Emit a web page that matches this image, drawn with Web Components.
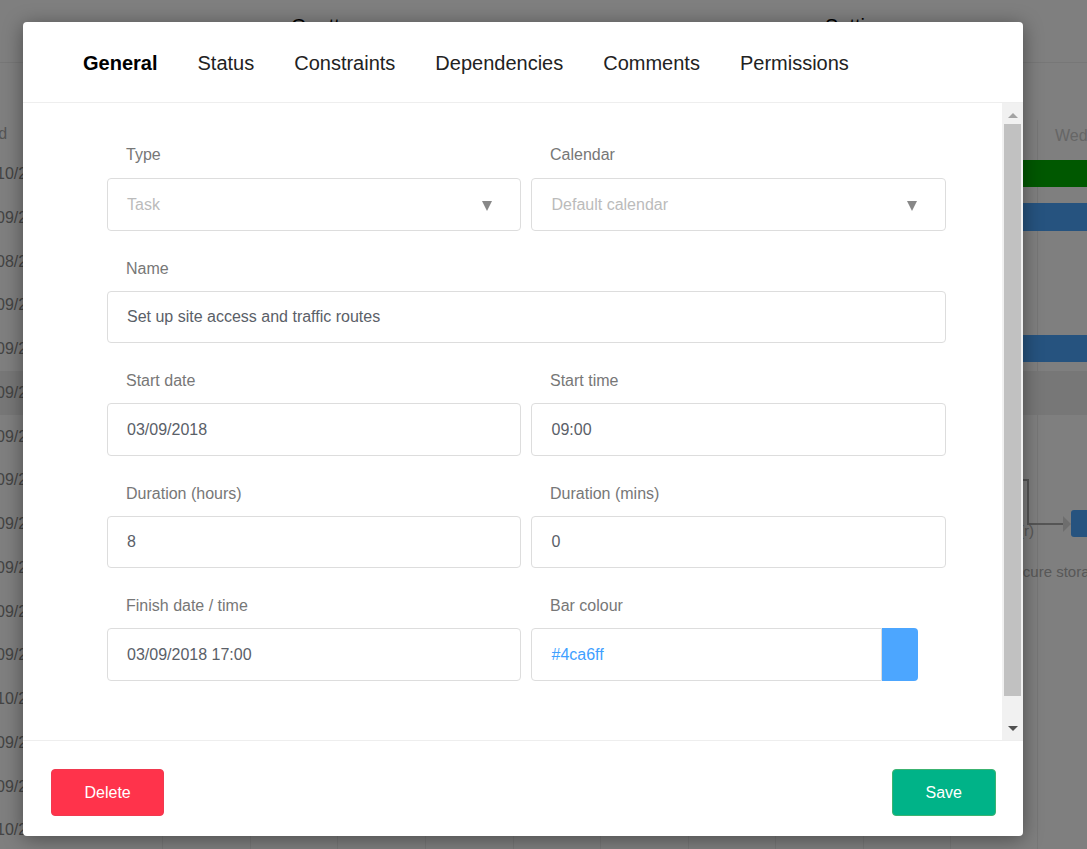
<!DOCTYPE html>
<html>
<head>
<meta charset="utf-8">
<title>Task editor</title>
<style>
  html, body { margin: 0; height: 100%; overflow: hidden; background: #fff; }
  body { font-family: "Liberation Sans", Arial, sans-serif; }
</style>
</head>
<body>
<gantt-app>
  <gantt-backdrop></gantt-backdrop>
  <task-modal>
    <tab-item slot="tabs" active>General</tab-item>
    <tab-item slot="tabs">Status</tab-item>
    <tab-item slot="tabs">Constraints</tab-item>
    <tab-item slot="tabs">Dependencies</tab-item>
    <tab-item slot="tabs">Comments</tab-item>
    <tab-item slot="tabs">Permissions</tab-item>

    <form-field label="Type" kind="select" muted first>Task</form-field>
    <form-field label="Calendar" kind="select" muted first right>Default calendar</form-field>
    <form-field label="Name" wide>Set up site access and traffic routes</form-field>
    <form-field label="Start date">03/09/2018</form-field>
    <form-field label="Start time" right>09:00</form-field>
    <form-field label="Duration (hours)">8</form-field>
    <form-field label="Duration (mins)" right>0</form-field>
    <form-field label="Finish date / time">03/09/2018 17:00</form-field>
    <form-field label="Bar colour" kind="colour" right>#4ca6ff</form-field>

    <action-button slot="footer" colour="#ff334b" edge="#f0394f" pad="32.5">Delete</action-button>
    <action-button slot="footer" colour="#00b388" edge="#3cb371" pad="33">Save</action-button>
  </task-modal>
</gantt-app>

<script>
class GanttApp extends HTMLElement {
  connectedCallback() {
    this.attachShadow({ mode: 'open' });
    this.shadowRoot.innerHTML = `
      <style>
        :host { display: block; position: relative; width: 100%; height: 100vh; overflow: hidden; }
        .overlay {
          position: absolute;
          inset: 0;
          background: rgba(0, 0, 0, 0.5);
          padding: 22px 0 0 23px;
          box-sizing: border-box;
        }
      </style>
      <slot></slot>
      <div class="overlay"><slot name="modal"></slot></div>
    `;
    const modal = this.querySelector('task-modal');
    if (modal) modal.slot = 'modal';
  }
}

class GanttBackdrop extends HTMLElement {
  connectedCallback() {
    this.attachShadow({ mode: 'open' });
    const dates = ['10/2', '09/2', '08/2', '09/2', '09/2', '09/2', '09/2', '09/2', '09/2', '09/2', '09/2', '09/2', '10/2', '09/2', '09/2', '10/2'];
    const lines = [162, 250, 337, 425, 513, 600, 688, 775, 863, 950, 1037];
    this.shadowRoot.innerHTML = `
      <style>
        :host { display: block; position: absolute; inset: 0; color: #333; font-size: 16px; font-family: "Liberation Sans", Arial, sans-serif; }
        .top { height: 62px; border-bottom: 1px solid #eee; position: relative; }
        .top span { position: absolute; top: 15px; font-size: 20px; color: #000; }
        .rows { position: absolute; left: 0; top: 152px; right: 0; }
        .row { height: 43.75px; line-height: 43.75px; box-sizing: border-box; white-space: nowrap; color: #888; }
        .row.hl { background: #eee; }
        .row span { margin-left: -4px; }
        .head { position: absolute; top: 125px; left: -39px; color: #aaa; }
        .line { position: absolute; top: 120px; bottom: 0; width: 1px; background: #eee; }
        .bar { position: absolute; left: 1023px; right: 0; }
        .wed { position: absolute; left: 1055px; top: 127px; color: #ccc; }
        .link { position: absolute; background: #aaa; }
        .tri { position: absolute; left: 1063px; top: 516px; border-left: 8px solid #ddd; border-top: 8px solid transparent; border-bottom: 8px solid transparent; }
        .node { position: absolute; left: 1071px; top: 510px; width: 40px; height: 27px; background: #4ca6ff; border-radius: 3px; }
        .note { position: absolute; color: #b0b0b0; font-size: 15px; white-space: nowrap; }
      </style>
      <div class="top"><span style="left:291px">Gantt</span><span style="left:825px">Settings</span></div>
      <div class="head">Period</div>
      <div class="rows">
        ${dates.map((d, i) => `<div class="row${i === 5 ? ' hl' : ''}"><span>${d}</span></div>`).join('')}
      </div>
      ${lines.map(x => `<div class="line" style="left:${x}px"></div>`).join('')}
      <div class="wed">Wed</div>
      <div class="bar" style="top:160px;height:27px;background:#00b000"></div>
      <div class="bar" style="top:203px;height:28px;background:#4ca6ff"></div>
      <div class="bar" style="top:335px;height:27px;background:#4ca6ff"></div>
      <div class="link" style="left:1000px;top:479px;width:29px;height:2px"></div>
      <div class="link" style="left:1027px;top:479px;width:2px;height:45px"></div>
      <div class="link" style="left:1027px;top:523px;width:37px;height:2px"></div>
      <div class="tri"></div>
      <div class="node"></div>
      <div class="note" style="right:53px;top:522px">(r)</div>
      <div class="note" style="left:1004.5px;top:563px">Secure storage</div>
    `;
  }
}

class TabItem extends HTMLElement {
  connectedCallback() {
    this.attachShadow({ mode: 'open' });
    this.shadowRoot.innerHTML = `
      <style>
        :host { display: block; font-size: 20px; line-height: 24px; margin-top: 2px; color: #222; white-space: nowrap; cursor: pointer; }
        :host([active]) { font-weight: 700; color: #000; }
      </style>
      <slot></slot>
    `;
  }
}

class FormField extends HTMLElement {
  connectedCallback() {
    this.attachShadow({ mode: 'open' });
    const kind = this.getAttribute('kind') || 'text';
    const arrow = kind === 'select'
      ? '<svg class="arrow" width="10" height="10" viewBox="0 0 10 10"><polygon points="0,0 10,0 5,10" fill="#888"/></svg>'
      : '';
    const swatch = kind === 'colour' ? '<div class="swatch"></div>' : '';
    this.shadowRoot.innerHTML = `
      <style>
        :host { display: block; min-width: 0; }
        :host([wide]) { grid-column: 1 / -1; }
        label { display: block; font-size: 16px; line-height: 24px; color: #777; padding: 2.125px 0 0 19px; margin-bottom: 9.875px; }
        :host([first]) label { padding-top: 1px; margin-bottom: 11px; }
        .wrap { display: flex; height: 52.5px; }
        .box {
          flex: 1;
          min-width: 0;
          display: flex;
          align-items: center;
          justify-content: space-between;
          box-sizing: border-box;
          border: 1px solid #ddd;
          border-radius: 4px;
          padding: 1px 28px 0 19px;
          font-size: 16px;
          color: #5a6068;
          background: #fff;
        }
        :host([right]) .box { padding-left: 19.5px; }
        :host([muted]) .box { color: #bbb; }
        :host([kind="colour"]) .wrap { margin-right: 28px; }
        :host([kind="colour"]) .box { color: #3fa0ff; border-radius: 4px 0 0 4px; }
        .swatch { flex: 0 0 36px; background: #4ca6ff; border-radius: 0 4px 4px 0; }
        .arrow { flex: none; margin-top: 2px; }
      </style>
      <label>${this.getAttribute('label')}</label>
      <div class="wrap">
        <div class="box"><span><slot></slot></span>${arrow}</div>
        ${swatch}
      </div>
    `;
  }
}

class ScrollTrack extends HTMLElement {
  connectedCallback() {
    this.attachShadow({ mode: 'open' });
    this.shadowRoot.innerHTML = `
      <style>
        :host { display: flex; flex: 0 0 21px; flex-direction: column; background: #f1f1f1; box-sizing: border-box; padding: 0 2px; }
        .cap { flex: 0 0 21px; display: flex; align-items: center; justify-content: center; }
        .cap.end { flex-basis: 24px; }
        .gap { flex: 1; }
        .thumb { flex: 0 0 572px; background: #c1c1c1; }
      </style>
      <div class="cap"><svg width="10" height="5" viewBox="0 0 10 5" style="margin-top:3px"><polygon points="5,0 10,5 0,5" fill="#a3a3a3"/></svg></div>
      <div class="thumb"></div>
      <div class="gap"></div>
      <div class="cap end"><svg width="10" height="5" viewBox="0 0 10 5"><polygon points="0,0 10,0 5,5" fill="#505050"/></svg></div>
    `;
  }
}

class ActionButton extends HTMLElement {
  connectedCallback() {
    this.attachShadow({ mode: 'open' });
    this.shadowRoot.innerHTML = `
      <style>
        :host {
          display: block;
          box-sizing: border-box;
          height: 47px;
          line-height: 45px;
          padding: 0 ${this.getAttribute('pad')}px;
          font-size: 16px;
          color: #fff;
          border-radius: 4px;
          cursor: pointer;
          background: ${this.getAttribute('colour')};
          border: 1px solid ${this.getAttribute('edge')};
        }
      </style>
      <slot></slot>
    `;
  }
}

class TaskModal extends HTMLElement {
  connectedCallback() {
    this.attachShadow({ mode: 'open' });
    this.shadowRoot.innerHTML = `
      <style>
        :host {
          display: flex;
          flex-direction: column;
          width: 1000px;
          height: 814px;
          background: #fff;
          border-radius: 4px;
          box-shadow: 0 3px 20px rgba(0, 0, 0, 0.4);
          overflow: hidden;
          font-family: "Liberation Sans", Arial, sans-serif;
        }
        header {
          flex: 0 0 80px;
          box-sizing: border-box;
          display: flex;
          align-items: center;
          gap: 40px;
          padding: 0 60px;
        }
        .body { flex: 1; display: flex; min-height: 0; border-top: 1px solid #eee; border-bottom: 1px solid #eee; }
        .form {
          flex: 1;
          box-sizing: border-box;
          display: grid;
          grid-template-columns: 414px 415px;
          column-gap: 10px;
          row-gap: 24px;
          align-content: start;
          padding: 39px 0 0 84px;
        }
        footer { flex: 0 0 95px; box-sizing: border-box; display: flex; align-items: flex-start; justify-content: space-between; padding: 28px 27px 0 28px; }
      </style>
      <header><slot name="tabs"></slot></header>
      <div class="body">
        <div class="form"><slot></slot></div>
        <scroll-track></scroll-track>
      </div>
      <footer><slot name="footer"></slot></footer>
    `;
  }
}

customElements.define('gantt-app', GanttApp);
customElements.define('gantt-backdrop', GanttBackdrop);
customElements.define('tab-item', TabItem);
customElements.define('form-field', FormField);
customElements.define('scroll-track', ScrollTrack);
customElements.define('action-button', ActionButton);
customElements.define('task-modal', TaskModal);
</script>
</body>
</html>
